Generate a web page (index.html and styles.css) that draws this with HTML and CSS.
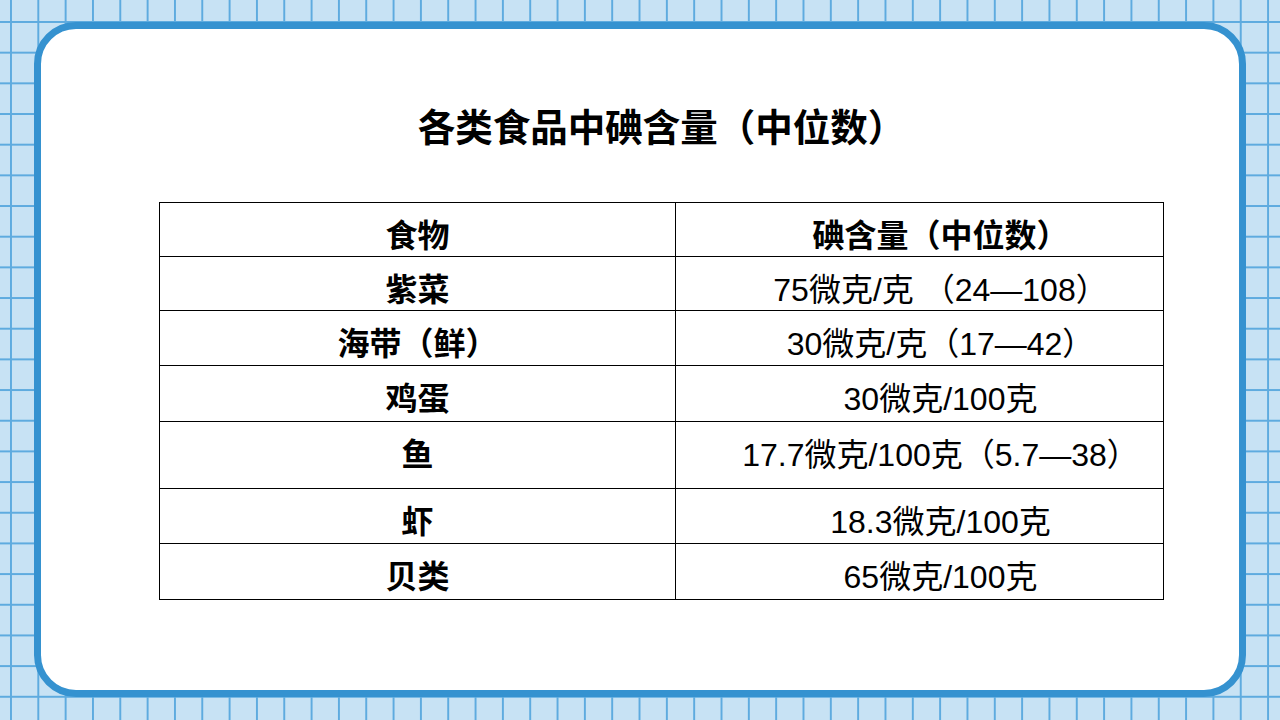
FILE: index.html
```html
<!DOCTYPE html>
<html lang="zh-CN">
<head>
<meta charset="utf-8">
<title>各类食品中碘含量（中位数）</title>
<link rel="stylesheet" href="styles.css">
</head>
<body>
<main class="card">
  <div class="content">
    <h1 class="title">各类食品中碘含量（中位数）</h1>
    <table class="data">
      <tr class="row r54">
        <th class="c1">食物</th>
        <th class="c2">碘含量（中位数）</th>
      </tr>
      <tr class="row r54">
        <td class="c1">紫菜</td>
        <td class="c2">75微克/克 （24—108）</td>
      </tr>
      <tr class="row r55">
        <td class="c1">海带（鲜）</td>
        <td class="c2">30微克/克（17—42）</td>
      </tr>
      <tr class="row r56">
        <td class="c1">鸡蛋</td>
        <td class="c2">30微克/100克</td>
      </tr>
      <tr class="row r67">
        <td class="c1">鱼</td>
        <td class="c2">17.7微克/100克（5.7—38）</td>
      </tr>
      <tr class="row r55">
        <td class="c1">虾</td>
        <td class="c2">18.3微克/100克</td>
      </tr>
      <tr class="row r56">
        <td class="c1">贝类</td>
        <td class="c2">65微克/100克</td>
      </tr>
    </table>
  </div>
</main>
</body>
</html>
```

FILE: styles.css
```css
html, body {
  margin: 0;
  padding: 0;
}

body {
  width: 1280px;
  height: 720px;
  box-sizing: border-box;
  padding: 22px 0 0 34px;
  overflow: hidden;
  background-color: #c7e2f4;
  background-image:
    linear-gradient(to right, #5eabdf 2px, transparent 2px),
    linear-gradient(to bottom, #5eabdf 2px, transparent 2px);
  background-size: 27.33px 30.68px;
  background-position: 10px 21px;
  font-family: "Liberation Sans", "Noto Sans CJK SC", sans-serif;
  color: #000;
}

.card {
  width: 1212px;
  height: 675px;
  box-sizing: border-box;
  border: 7px solid #3592d0;
  border-radius: 42px;
  background: #fff;
  padding-top: 77px;
}

.content {
  width: 1005px;
  margin-left: 118px;
}

.title {
  margin: 0 0 51px 0;
  font-size: 37.5px;
  line-height: 45px;
  font-weight: 700;
  text-align: center;
}

.data {
  width: 1005px;
  border-collapse: collapse;
  table-layout: fixed;
  font-size: 32px;
}

.data th,
.data td {
  border: 1px solid #000;
  padding: 14px 0 0 0;
  text-align: center;
  vertical-align: top;
  line-height: 38px;
  white-space: nowrap;
}

.data th {
  font-weight: 700;
}

.data .c1 {
  width: 515px;
  font-weight: 700;
}

.data .c2 {
  font-weight: 400;
  padding-left: 42px;
}

.data th.c2 {
  font-weight: 700;
}

.r54 { height: 54px; }
.r55 { height: 55px; }
.r56 { height: 56px; }
.r67 { height: 67px; }
```
